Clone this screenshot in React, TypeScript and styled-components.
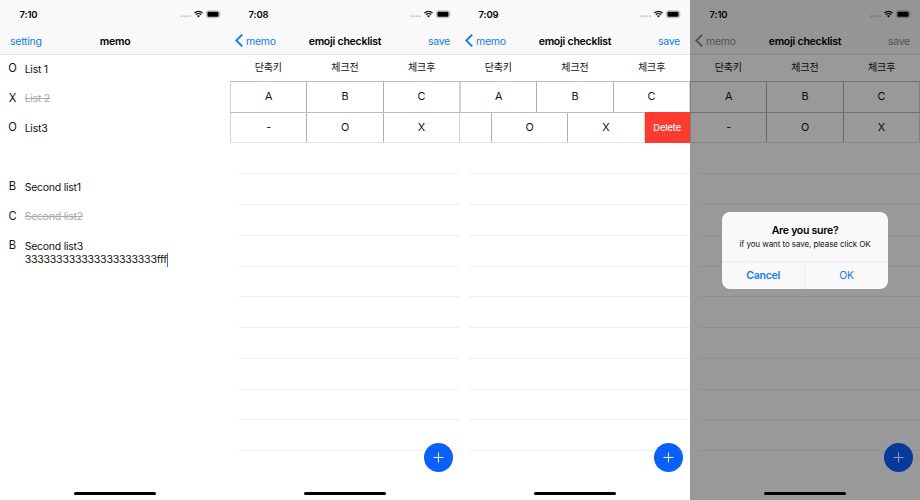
import React from "react";
import styled, { createGlobalStyle, css } from "styled-components";

const BLUE = "#107cfa";
const ROW_HEIGHT = "30.77px";

const GlobalStyle = createGlobalStyle`
  *, *::before, *::after { box-sizing: border-box; }
  body {
    margin: 0;
    background: #fff;
    color: #111;
    font-family: Inter, "Noto Sans CJK KR", sans-serif;
    font-size: 10.5px;
    letter-spacing: -0.25px;
    overflow: hidden;
  }
  button { letter-spacing: inherit; }
`;

const Gallery = styled.main`
  display: grid;
  grid-template-columns: repeat(4, 230px);
  width: 920px;
  height: 500px;
`;

const Screen = styled.section`
  position: relative;
  display: flex;
  flex-direction: column;
  width: 230px;
  height: 500px;
  overflow: hidden;
  background: #fff;
`;

const Header = styled.header`
  flex: none;
  height: 55px;
  background: #f9f9f9;
  border-bottom: 1px solid #e6e6e6;
`;

const StatusBar = styled.div`
  display: flex;
  justify-content: space-between;
  height: 27px;
  padding: 8px 8px 0 0;
`;

const Clock = styled.span`
  width: 57px;
  text-align: center;
  font-size: 9.5px;
  letter-spacing: -0.1px;
  line-height: 13px;
  font-weight: 600;
  color: #000;
`;

const NavBar = styled.nav`
  display: grid;
  grid-template-columns: 60px 1fr 60px;
  align-items: center;
  height: 27px;
  padding: 0 10px 0 5px;
`;

const NavTitle = styled.h1`
  margin: 0 0 0 5px;
  padding-top: 2px;
  text-align: center;
  white-space: nowrap;
  font-size: 10.5px;
  line-height: 14px;
  font-weight: 600;
  letter-spacing: -0.22px;
  color: #000;
`;

const NavButton = styled.button<{ $muted?: boolean; $end?: boolean; $inset?: boolean }>`
  display: flex;
  align-items: center;
  gap: 3px;
  justify-content: ${(p) => (p.$end ? "flex-end" : "flex-start")};
  margin: 0;
  padding: 0 0 0 ${(p) => (p.$inset ? 5 : 0)}px;
  border: 0;
  background: none;
  font: inherit;
  line-height: 14px;
  color: ${(p) => (p.$muted ? "#8c8c8c" : BLUE)};
`;

const NavLabel = styled.span`
  padding-top: 2px;
`;

const MemoList = styled.ul`
  margin: 0;
  padding: 0;
  list-style: none;
`;

const MemoRow = styled.li`
  display: grid;
  grid-template-columns: 24.7px 1fr;
  height: 29.5px;
  line-height: 13.4px;
`;

const Mark = styled.span`
  padding-top: 7.1px;
  text-align: center;
  font-size: 11.2px;
`;

const MemoText = styled.span<{ $done?: boolean }>`
  padding-top: 7.8px;
  white-space: nowrap;
  ${(p) =>
    p.$done &&
    css`
      color: #aaa;
      text-decoration: line-through;
    `}
`;

const LongLine = styled.span`
  letter-spacing: -0.2px;
`;

const Caret = styled.i`
  display: inline-block;
  width: 1px;
  height: 14px;
  background: #3b68e8;
  vertical-align: top;
`;

const ColumnHeads = styled.div`
  display: grid;
  grid-template-columns: repeat(3, 1fr);
  flex: none;
  height: 26px;
  text-align: center;
  font-size: 10px;
  letter-spacing: -0.1px;
  line-height: 25px;
`;

const Table = styled.div`
  flex: none;
`;

const TableRow = styled.div<{ $open?: boolean }>`
  display: flex;
  justify-content: ${(p) => (p.$open ? "flex-end" : "flex-start")};
  height: ${ROW_HEIGHT};
  overflow: hidden;
`;

const Cells = styled.div<{ $last?: boolean }>`
  display: grid;
  grid-template-columns: repeat(3, 1fr);
  flex: none;
  width: 230px;
  border-top: 1px solid #bdbdbd;
  border-left: 1px solid #d4d4d4;
  border-bottom: ${(p) => (p.$last ? "1px solid #e4e4e4" : "0")};
`;

const Cell = styled.span`
  border-right: 1px solid #b0b0b0;
  text-align: center;
  font-size: 10.8px;
  line-height: 29px;
  &:last-child { border-right-color: #d4d4d4; }
`;

const DeleteAction = styled.button`
  flex: none;
  width: 45.5px;
  margin: 0;
  padding: 0;
  border: 0;
  background: #ff3b30;
  color: #fff;
  font: inherit;
  font-size: 9.2px;
  font-weight: 500;
  letter-spacing: -0.05px;
`;

const EmptyRows = styled.div`
  margin: 1px 0 0 9px;
`;

const EmptyRow = styled.div`
  height: ${ROW_HEIGHT};
  border-bottom: 1px solid #f0f0f0;
`;

const AddButton = styled.button`
  position: absolute;
  left: 194px;
  top: 443px;
  display: grid;
  place-items: center;
  width: 29px;
  height: 29px;
  padding: 0;
  border: 0;
  border-radius: 50%;
  background: #0a60ff;
`;

const HomeIndicator = styled.div`
  position: absolute;
  left: 74px;
  bottom: 5px;
  width: 82px;
  height: 3px;
  border-radius: 2px;
  background: #000;
`;

const Backdrop = styled.div`
  position: absolute;
  inset: 0;
  background: rgba(0, 0, 0, 0.4);
`;

const Dialog = styled.div`
  position: absolute;
  left: 32.3px;
  top: 212px;
  display: grid;
  grid-template-rows: 49px 1fr;
  width: 165.5px;
  height: 76.5px;
  border-radius: 8px;
  overflow: hidden;
  background: #f9f9f9;
  text-align: center;
`;

const DialogBody = styled.div`
  padding-top: 12px;
`;

const DialogTitle = styled.h2`
  margin: 0;
  font-size: 10.5px;
  line-height: 13px;
  font-weight: 600;
  color: #000;
`;

const DialogMessage = styled.p`
  margin: 0;
  font-size: 8px;
  letter-spacing: -0.08px;
  line-height: 14px;
  white-space: nowrap;
`;

const DialogActions = styled.div`
  display: grid;
  grid-template-columns: 1fr 1fr;
  border-top: 1px solid #ededed;
`;

const DialogButton = styled.button<{ $strong?: boolean }>`
  padding: 0;
  border: 0;
  border-right: ${(p) => (p.$strong ? "1px solid #ededed" : "0")};
  background: none;
  font: inherit;
  font-weight: ${(p) => (p.$strong ? 600 : 400)};
  color: ${BLUE};
`;

const StatusIcons = () => (
  <svg width="42" height="13" viewBox="0 0 42 13">
    <g fill="#c4c4c4">
      <circle cx="1.5" cy="8.2" r="1" />
      <circle cx="4.3" cy="8.2" r="1" />
      <circle cx="7.1" cy="8.2" r="1" />
      <circle cx="9.9" cy="8.2" r="1" />
    </g>
    <g fill="none" stroke="#111" strokeWidth="1.35">
      <path d="M14.4 5.1C16.7 2.7 20.3 2.7 22.6 5.1" />
      <path d="M15.9 6.7C17.4 5.2 19.6 5.2 21.1 6.7" />
    </g>
    <path d="M16.9 7.8Q18.5 6.6 20.1 7.8L18.5 9.5Z" fill="#111" />
    <rect x="26.5" y="2.8" width="13" height="6.9" rx="2" fill="#e5e5e5" stroke="#aaa" strokeWidth=".8" />
    <rect x="27.5" y="3.8" width="11" height="4.9" rx="1" fill="#000" />
    <path d="M40.5 5Q42 6.2 40.5 7.5Z" fill="#aaa" />
  </svg>
);

const BackChevron = () => (
  <svg width="8" height="13" viewBox="0 0 8 13" fill="none" stroke="currentColor" strokeWidth="1.9">
    <path d="M7.2.6 1.3 6.5l5.9 5.9" />
  </svg>
);

const PlusIcon = () => (
  <svg width="11" height="11" viewBox="0 0 11 11" stroke="#fff" strokeWidth="1">
    <path d="M.5 5.5h10M5.5.5v10" />
  </svg>
);

type Memo = { mark: string; text: string; done?: boolean };

const memos: Memo[] = [
  { mark: "O", text: "List 1" },
  { mark: "X", text: "List 2", done: true },
  { mark: "O", text: "List3" },
  { mark: "", text: "" },
  { mark: "B", text: "Second list1" },
  { mark: "C", text: "Second list2", done: true },
  { mark: "B", text: "Second list3" },
];

const MemoScreen = () => (
  <Screen>
    <Header>
      <StatusBar>
        <Clock>7:10</Clock>
        <StatusIcons />
      </StatusBar>
      <NavBar>
        <NavButton $inset>
          <NavLabel>setting</NavLabel>
        </NavButton>
        <NavTitle>memo</NavTitle>
      </NavBar>
    </Header>
    <MemoList>
      {memos.map((memo, i) => (
        <MemoRow key={i}>
          <Mark>{memo.mark}</Mark>
          <MemoText $done={memo.done}>
            {memo.text}
            {i === memos.length - 1 && (
              <>
                <br />
                <LongLine>333333333333333333333fff</LongLine>
                <Caret />
              </>
            )}
          </MemoText>
        </MemoRow>
      ))}
    </MemoList>
    <HomeIndicator />
  </Screen>
);

type ChecklistProps = { time: string; swiped?: boolean; confirming?: boolean };

const ChecklistScreen = ({ time, swiped, confirming }: ChecklistProps) => (
  <Screen>
    <Header>
      <StatusBar>
        <Clock>{time}</Clock>
        <StatusIcons />
      </StatusBar>
      <NavBar>
        <NavButton $muted={confirming}>
          <BackChevron />
          <NavLabel>memo</NavLabel>
        </NavButton>
        <NavTitle>emoji checklist</NavTitle>
        <NavButton $muted={confirming} $end>
          <NavLabel>save</NavLabel>
        </NavButton>
      </NavBar>
    </Header>
    <ColumnHeads>
      <span>단축키</span>
      <span>체크전</span>
      <span>체크후</span>
    </ColumnHeads>
    <Table>
      <TableRow>
        <Cells>
          <Cell>A</Cell>
          <Cell>B</Cell>
          <Cell>C</Cell>
        </Cells>
      </TableRow>
      <TableRow $open={swiped}>
        <Cells $last>
          <Cell>{!swiped && "-"}</Cell>
          <Cell>O</Cell>
          <Cell>X</Cell>
        </Cells>
        {swiped && <DeleteAction>Delete</DeleteAction>}
      </TableRow>
      <EmptyRows>
        {Array.from({ length: 10 }, (_, i) => (
          <EmptyRow key={i} />
        ))}
      </EmptyRows>
    </Table>
    <AddButton aria-label="Add">
      <PlusIcon />
    </AddButton>
    {confirming && <Backdrop />}
    <HomeIndicator />
    {confirming && (
      <Dialog role="dialog">
        <DialogBody>
          <DialogTitle>Are you sure?</DialogTitle>
          <DialogMessage>if you want to save, please click OK</DialogMessage>
        </DialogBody>
        <DialogActions>
          <DialogButton $strong>Cancel</DialogButton>
          <DialogButton>OK</DialogButton>
        </DialogActions>
      </Dialog>
    )}
  </Screen>
);

export default function App() {
  return (
    <>
      <GlobalStyle />
      <Gallery>
        <MemoScreen />
        <ChecklistScreen time="7:08" />
        <ChecklistScreen time="7:09" swiped />
        <ChecklistScreen time="7:10" confirming />
      </Gallery>
    </>
  );
}
